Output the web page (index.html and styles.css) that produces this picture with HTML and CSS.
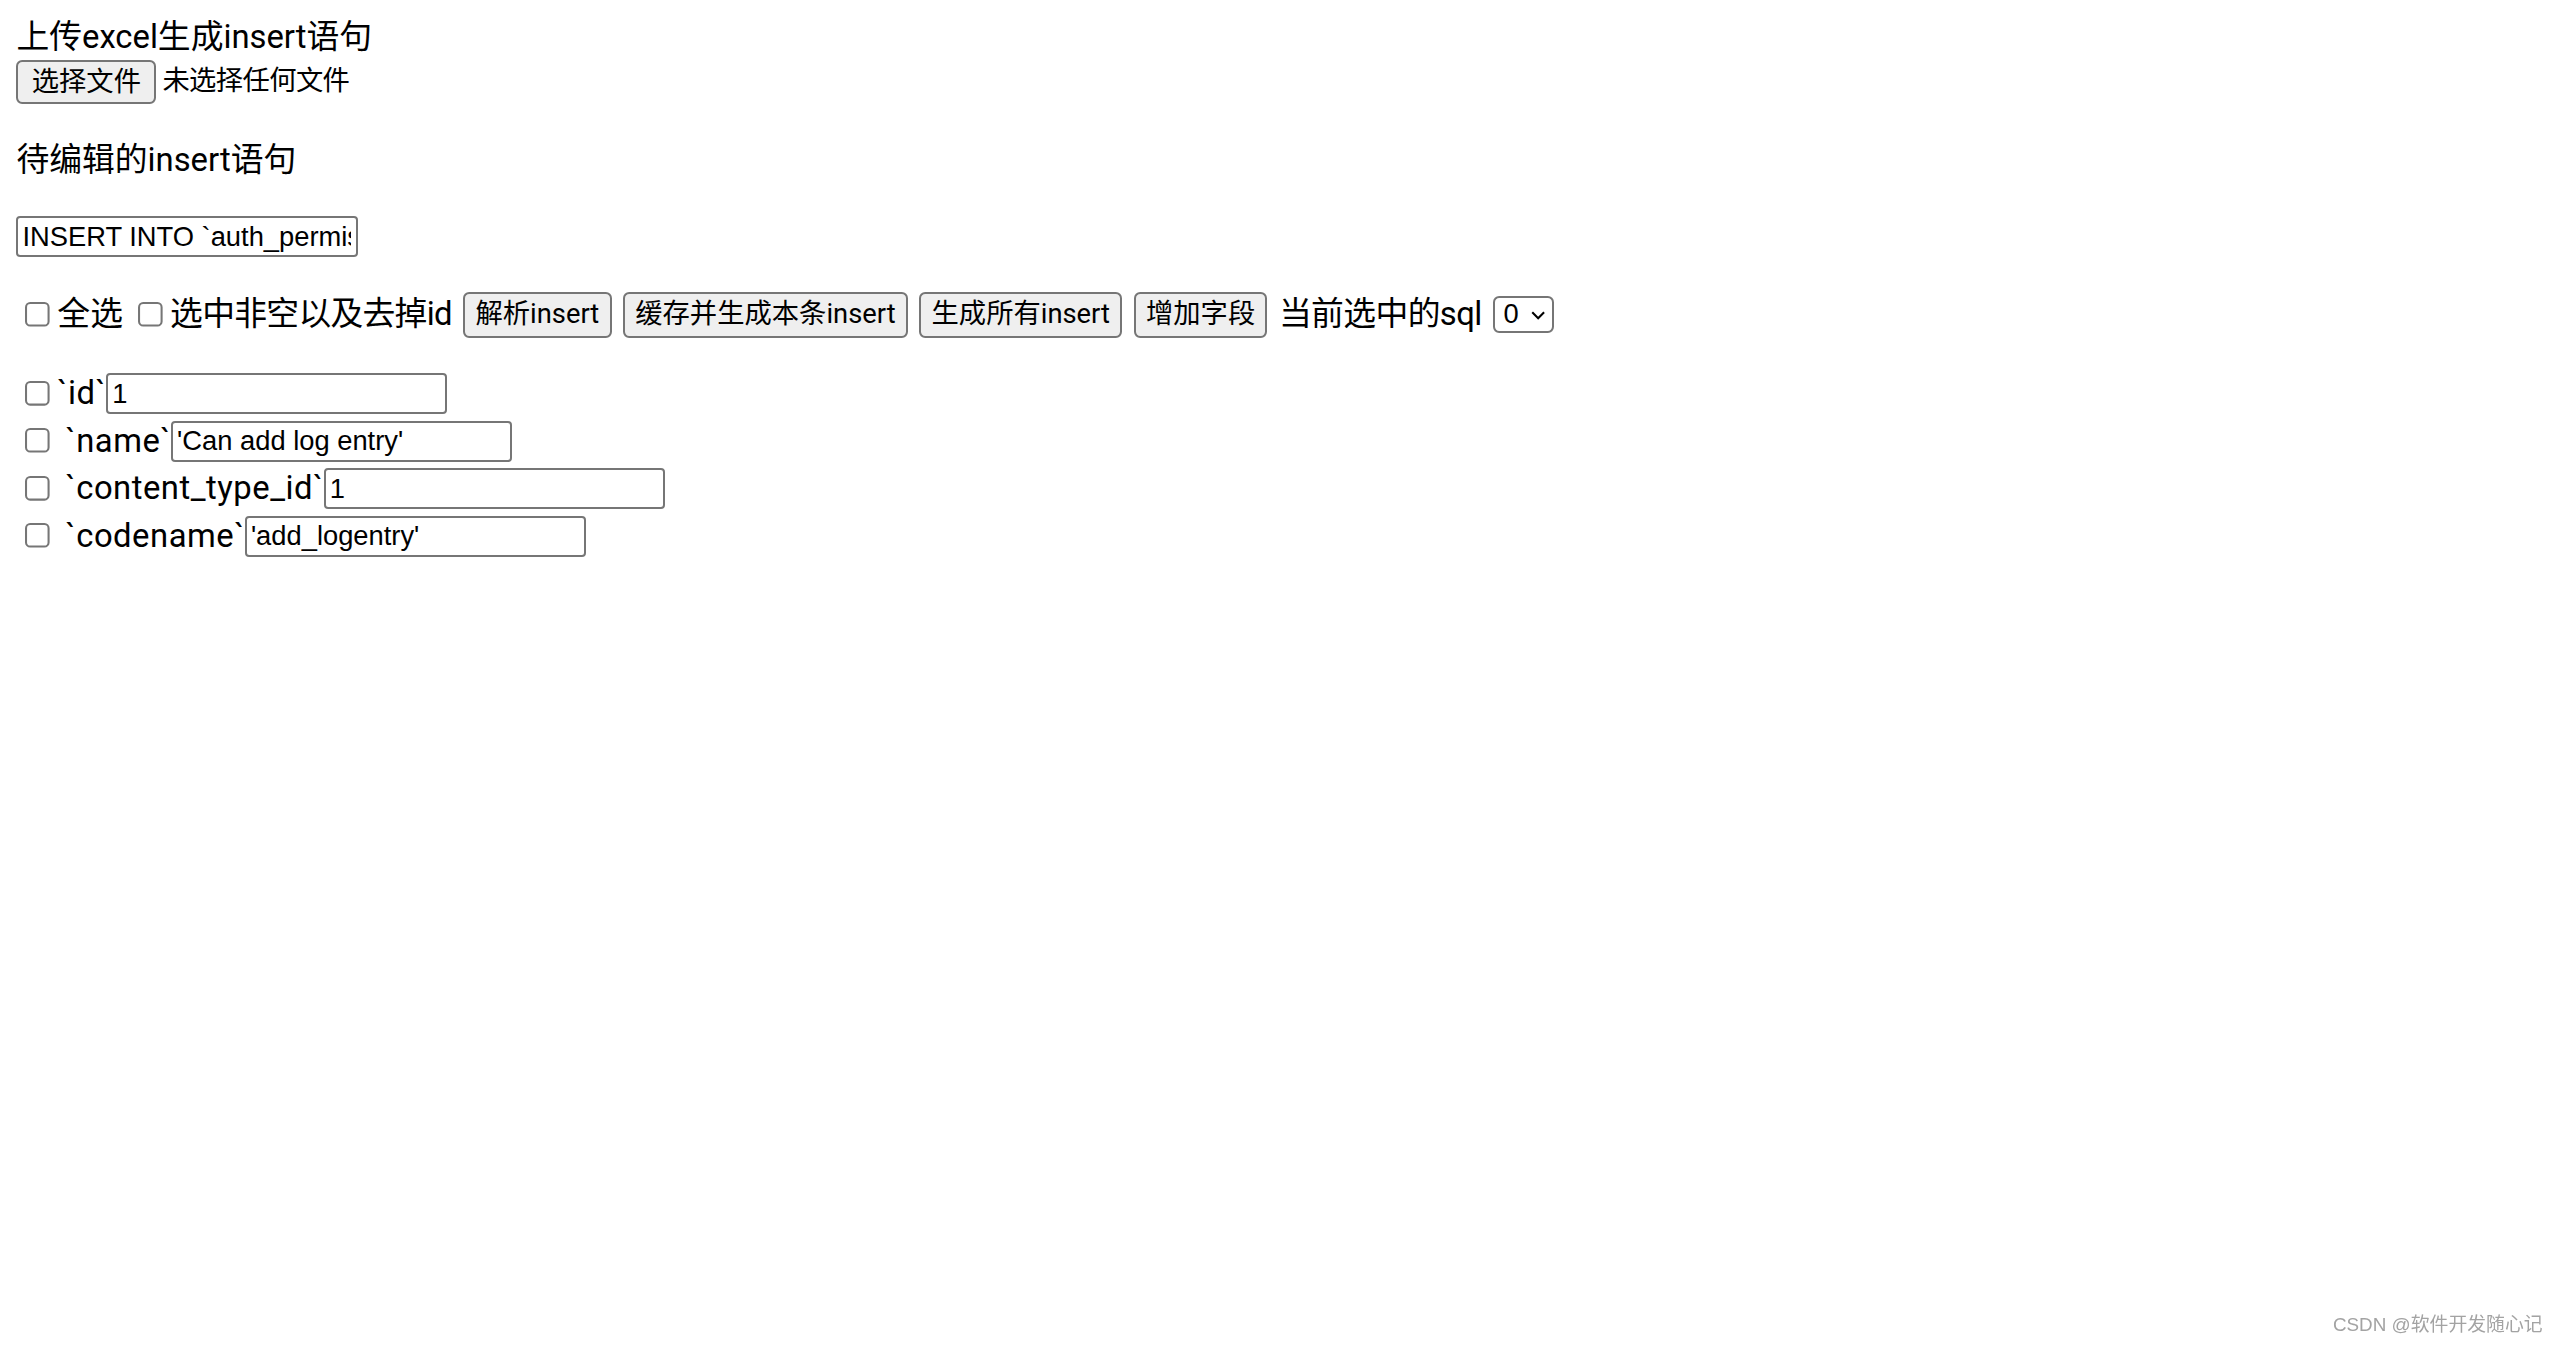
FILE: index.html
```html
<!DOCTYPE html>
<html lang="zh-CN">
<head>
<meta charset="utf-8">
<title>上传excel生成insert语句</title>
<link rel="stylesheet" href="styles.css">
</head>
<body>
<div class="title">上传excel生成insert语句</div>
<div class="file-row">
  <button class="btn btn-file" type="button">选择文件</button>
  <span class="file-status">未选择任何文件</span>
</div>
<p class="title title-edit">待编辑的insert语句</p>
<input class="text-input sql-input" type="text" value="INSERT INTO `auth_permission` (`id`, `name`, `content_type_id`, `codename`) VALUES (1, 'Can add log entry', 1, 'add_logentry');">
<div class="toolbar">
  <label class="opt"><input class="check" type="checkbox">全选</label>
  <label class="opt opt-second"><input class="check" type="checkbox"><span class="opt-text">选中非空以及去掉id</span></label>
  <button class="btn" type="button">解析insert</button>
  <button class="btn" type="button">缓存并生成本条insert</button>
  <button class="btn" type="button">生成所有insert</button>
  <button class="btn" type="button">增加字段</button>
  <span class="sql-label">当前选中的sql</span>
  <span class="select-wrap">
    <select class="sql-select"><option>0</option></select>
    <svg class="select-arrow" viewBox="0 0 8 5" width="8" height="5" aria-hidden="true"><path d="M0.7 0.7 L4 4 L7.3 0.7" fill="none" stroke="#000" stroke-width="1.15"/></svg>
  </span>
</div>
<div class="fields">
  <div class="field"><input class="check" type="checkbox"><span class="field-name">`id`</span><input class="text-input" type="text" value="1"></div>
  <div class="field"><input class="check" type="checkbox"><span class="field-name field-name-pad">`name`</span><input class="text-input" type="text" value="'Can add log entry'"></div>
  <div class="field"><input class="check" type="checkbox"><span class="field-name field-name-pad">`content_type_id`</span><input class="text-input" type="text" value="1"></div>
  <div class="field"><input class="check" type="checkbox"><span class="field-name field-name-pad">`codename`</span><input class="text-input" type="text" value="'add_logentry'"></div>
</div>
<div class="watermark">CSDN @软件开发随心记</div>
</body>
</html>
```
FILE: styles.css
```css
html {
  zoom: 2.05;
  background: #ffffff;
}

body {
  margin: 8px;
  font-family: Roboto, "Noto Sans CJK SC", sans-serif;
  font-size: 16px;
  line-height: 21px;
  color: #000000;
}

.title {
  height: 21px;
  line-height: 21px;
  white-space: nowrap;
}

.title-edit {
  margin: 17px 0 0;
}

.file-row {
  display: flex;
  align-items: center;
  height: 22px;
}

.btn {
  box-sizing: border-box;
  height: 22.4px;
  padding: 0 5px;
  border: 1px solid #767676;
  border-radius: 3px;
  background: #efefef;
  color: #000000;
  font-family: Roboto, "Noto Sans CJK SC", sans-serif;
  font-size: 13.33px;
  line-height: 20px;
  white-space: nowrap;
}

.btn-file {
  height: 21.6px;
  padding: 0 6.5px;
}

.file-status {
  margin-left: 3px;
  font-size: 13.33px;
  letter-spacing: -0.3px;
}

.text-input {
  box-sizing: border-box;
  width: 166.4px;
  height: 20px;
  margin: 0;
  padding: 0 2px;
  border: 1px solid #767676;
  border-radius: 2px;
  font-family: "Liberation Sans", Arial, sans-serif;
  font-size: 13.33px;
  color: #000000;
  background: #ffffff;
}

.sql-input {
  display: block;
  margin-top: 16.6px;
}

.toolbar {
  display: flex;
  align-items: center;
  gap: 5.6px;
  height: 23px;
  margin-top: 16.5px;
  white-space: nowrap;
}

.opt {
  display: flex;
  align-items: center;
}

.opt-second {
  margin-left: -2.6px;
}

.opt-text {
  letter-spacing: -0.35px;
}

.check {
  width: 13px;
  height: 13px;
  margin: 3px 3px 3px 4px;
}

.sql-label {
  letter-spacing: -0.3px;
}

.select-wrap {
  position: relative;
  display: flex;
  align-items: center;
}

.sql-select {
  appearance: none;
  -webkit-appearance: none;
  box-sizing: border-box;
  width: 29.6px;
  height: 18px;
  margin: 0;
  padding: 0 0 0 4.2px;
  border: 1px solid #767676;
  border-radius: 3px;
  font-family: "Liberation Sans", Arial, sans-serif;
  font-size: 13.33px;
  line-height: 16px;
  background: #ffffff;
  color: #000000;
}

.select-arrow {
  position: absolute;
  right: 4.2px;
  top: 7px;
  width: 7px;
  height: 4.4px;
  pointer-events: none;
}

.fields {
  margin-top: 15.3px;
}

.field {
  display: flex;
  align-items: center;
  height: 23.2px;
  white-space: nowrap;
}

.field-name {
  letter-spacing: 0.25px;
}

.field-name-pad {
  padding-left: 4px;
}

.watermark {
  position: fixed;
  right: 8px;
  bottom: 4px;
  font-family: "Liberation Sans", "Noto Sans CJK SC", sans-serif;
  font-size: 9.2px;
  line-height: 11px;
  color: #a3a3a3;
}
```
